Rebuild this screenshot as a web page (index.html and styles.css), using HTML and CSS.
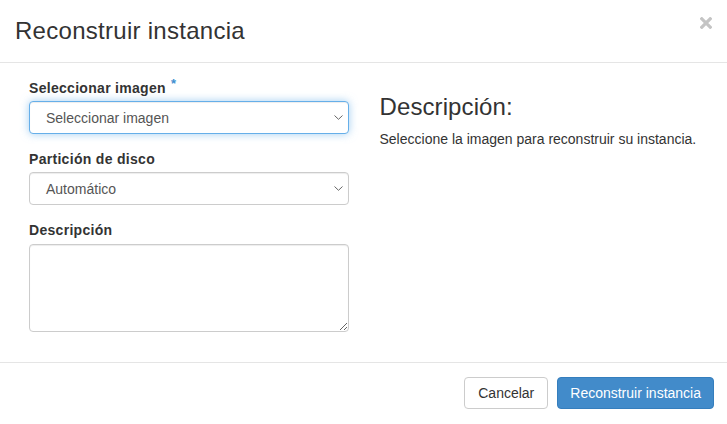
FILE: index.html
```html
<!DOCTYPE html>
<html lang="es">
<head>
<meta charset="utf-8">
<title>Reconstruir instancia</title>
<link rel="stylesheet" href="styles.css">
</head>
<body>
<div class="modal">
  <div class="modal-header">
    <h4 class="modal-title">Reconstruir instancia</h4>
    <button class="close" type="button" aria-label="Cerrar">
      <svg width="12" height="12" viewBox="0 0 12 12"><path d="M1.8 1.8 L10.2 10.2 M10.2 1.8 L1.8 10.2" stroke="#c4c4c4" stroke-width="3.2" stroke-linecap="square"/></svg>
    </button>
  </div>
  <div class="modal-body">
    <div class="col col-left">
      <div class="form-group">
        <label class="label">Seleccionar imagen <span class="req">*</span></label>
        <div class="select focus">
          <span class="select-text">Seleccionar imagen</span>
          <svg class="chev" width="9" height="5" viewBox="0 0 9 5"><path d="M0.5 0.5 L4.5 4.3 L8.5 0.5" fill="none" stroke="#666" stroke-width="1"/></svg>
        </div>
      </div>
      <div class="form-group">
        <label class="label">Partición de disco</label>
        <div class="select">
          <span class="select-text">Automático</span>
          <svg class="chev" width="9" height="5" viewBox="0 0 9 5"><path d="M0.5 0.5 L4.5 4.3 L8.5 0.5" fill="none" stroke="#666" stroke-width="1"/></svg>
        </div>
      </div>
      <div class="form-group">
        <label class="label label-desc">Descripción</label>
        <textarea class="textarea"></textarea>
      </div>
    </div>
    <div class="col col-right">
      <h3 class="desc-title">Descripción:</h3>
      <p class="desc-text">Seleccione la imagen para reconstruir su instancia.</p>
    </div>
  </div>
  <div class="modal-footer">
    <button class="btn btn-default" type="button">Cancelar</button>
    <button class="btn btn-primary" type="button">Reconstruir instancia</button>
  </div>
</div>
</body>
</html>
```

FILE: styles.css
```css
* { box-sizing: border-box; }
html, body {
  margin: 0;
  padding: 0;
  background: #fff;
}
body {
  font-family: "Liberation Sans", Arial, sans-serif;
  font-size: 14px;
  line-height: 20px;
  color: #333;
  width: 727px;
  height: 424px;
  overflow: hidden;
}
.modal {
  width: 727px;
}
.modal-header {
  display: flex;
  align-items: center;
  justify-content: space-between;
  padding: 15px 15px 15px 15px;
  border-bottom: 1px solid #e5e5e5;
  height: 63px;
}
.modal-title {
  margin: 0;
  font-size: 24px;
  font-weight: normal;
  line-height: 32px;
  letter-spacing: 0.28px;
  color: #333;
}
.close {
  border: 0;
  background: none;
  padding: 0;
  margin-right: 0;
  display: flex;
  align-self: flex-start;
  margin-top: 2px;
}
.modal-body {
  display: grid;
  grid-template-columns: 1fr 1fr;
  padding: 15px 0;
}
.col-left {
  padding: 0 15px 0 29px;
}
.col-right {
  padding: 0 15px 0 15px;
}
.form-group {
  margin-bottom: 15px;
}
.label {
  display: block;
  font-weight: bold;
  margin-bottom: 3px;
  letter-spacing: 0.3px;
  color: #333;
}
.label-desc {
  margin-bottom: 4px;
}
.req {
  color: #3e8ed0;
  font-size: 13px;
  vertical-align: top;
  position: relative;
  top: -4px;
  margin-left: 1px;
}
.select {
  display: flex;
  align-items: center;
  justify-content: space-between;
  height: 33px;
  border: 1px solid #ccc;
  border-radius: 4px;
  padding: 0 5px 0 16px;
  color: #555;
  background: #fff;
  box-shadow: inset 0 1px 1px rgba(0,0,0,0.075);
}
.select.focus {
  border-color: #66afe9;
  box-shadow: inset 0 1px 1px rgba(0,0,0,0.075), 0 0 8px rgba(102,175,233,0.6);
}
.select-text {
  color: #555;
}
.chev {
  display: block;
}
.textarea {
  display: block;
  width: 100%;
  height: 88px;
  border: 1px solid #ccc;
  border-radius: 4px;
  box-shadow: inset 0 1px 1px rgba(0,0,0,0.075);
  resize: vertical;
  font-family: inherit;
  font-size: 14px;
  padding: 6px 12px;
  margin: 0;
}
.desc-title {
  margin: 15px 0 10px 1px;
  font-size: 24px;
  font-weight: normal;
  line-height: 27px;
  letter-spacing: 0.1px;
  color: #333;
}
.desc-text {
  margin: 0 0 0 1px;
  font-size: 14px;
  line-height: 19px;
  color: #333;
}
.modal-footer {
  display: flex;
  justify-content: flex-end;
  gap: 9px;
  padding: 14px 13px 15px 15px;
  border-top: 1px solid #e5e5e5;
}
.btn {
  font-family: inherit;
  font-size: 14px;
  line-height: 20px;
  height: 32px;
  padding: 5px 12px;
  border-radius: 4px;
  border: 1px solid #ccc;
  cursor: pointer;
}
.btn-default {
  background: #fff;
  color: #333;
  padding: 5px 13px;
}
.btn-primary {
  background: #428bca;
  border-color: #357ebd;
  color: #fff;
}
```
